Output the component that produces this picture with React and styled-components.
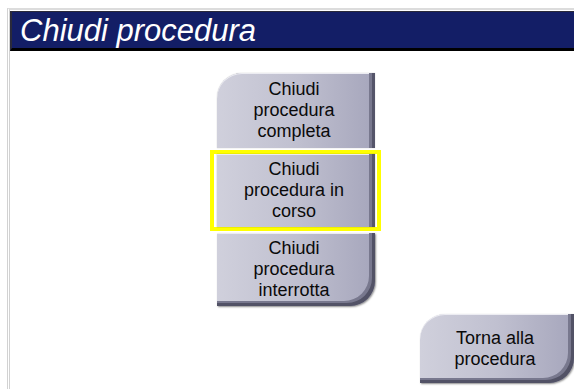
import React from "react";
import styled, { createGlobalStyle, css } from "styled-components";

const GlobalStyle = createGlobalStyle`
  html, body {
    margin: 0;
    background: #ffffff;
    overflow: hidden;
  }
  body {
    font-family: "Liberation Sans", Arial, sans-serif;
  }
`;

const Frame = styled.div`
  margin: 8px 0 0 7px;
  padding-top: 1px;
  height: 380px;
  border-top: 2px solid #dcdcdc;
  border-left: 3px double #d2d2d2;
`;

const Header = styled.h1`
  margin: 0;
  height: 36px;
  padding-left: 8px;
  background: #131e66;
  border-top: 1px solid #2a2a3a;
  border-left: 2px solid #2a2a3a;
  border-bottom: 3px solid #000000;
  color: #ffffff;
  font-size: 31px;
  font-style: italic;
  font-weight: normal;
  line-height: 37px;
  white-space: nowrap;
`;

const Column = styled.div`
  display: flex;
  flex-direction: column;
  align-items: flex-start;
  margin: 18px 0 0 200px;
`;

const Slot = styled.div`
  display: flex;
  padding: 0 2px 0 3px;
  border: 4px solid ${(p) => (p.$active ? "#ffff00" : "transparent")};

  & + & {
    margin-top: -2px;
  }
`;

const radius = {
  tl: "25px 0 0 0",
  none: "0",
  br: "0 0 25px 0",
  both: "25px 0 25px 0",
};

const Button = styled.button`
  display: flex;
  align-items: center;
  justify-content: center;
  width: 158px;
  height: ${(p) => p.$h}px;
  padding: 0 4px 0 0;
  border: none;
  border-radius: ${(p) => radius[p.$shape]};
  background: linear-gradient(90deg, #d0d0dc 0%, #c0c0d0 50%, #a6a6bc 100%);
  box-shadow: inset -3px 0 0 #55556a, inset -6px 0 0 #78788e,
    inset 0 1px 0 #ececf2, 0 0 1px rgba(0, 0, 0, 0.4);
  color: #0a0a0a;
  font-family: "Liberation Sans", Arial, sans-serif;
  font-size: 18px;
  line-height: 21px;
  text-align: center;
  cursor: pointer;

  ${(p) =>
    (p.$shape === "br" || p.$shape === "both") &&
    css`
      box-shadow: inset -3px -3px 0 #525266, inset -6px -5px 0 #78788e,
        inset 0 1px 0 #ececf2, 1px 1px 2px rgba(0, 0, 0, 0.45);
    `}
`;

const Footer = styled.div`
  display: flex;
  margin: 4px 0 0 410px;
`;

const actions = [
  { label: ["Chiudi", "procedura", "completa"], shape: "tl", h: 75 },
  { label: ["Chiudi", "procedura in", "corso"], shape: "none", h: 73, active: true },
  { label: ["Chiudi", "procedura", "interrotta"], shape: "br", h: 73 },
];

function Label({ lines }) {
  return (
    <span>
      {lines.map((l, i) => (
        <React.Fragment key={i}>
          {i > 0 && <br />}
          {l}
        </React.Fragment>
      ))}
    </span>
  );
}

export default function App() {
  return (
    <>
      <GlobalStyle />
      <Frame>
        <Header>Chiudi procedura</Header>
        <Column>
          {actions.map((a) => (
            <Slot key={a.label.join(" ")} $active={a.active}>
              <Button $shape={a.shape} $h={a.h}>
                <Label lines={a.label} />
              </Button>
            </Slot>
          ))}
        </Column>
        <Footer>
          <Button $shape="both" $h={69}>
            <Label lines={["Torna alla", "procedura"]} />
          </Button>
        </Footer>
      </Frame>
    </>
  );
}
